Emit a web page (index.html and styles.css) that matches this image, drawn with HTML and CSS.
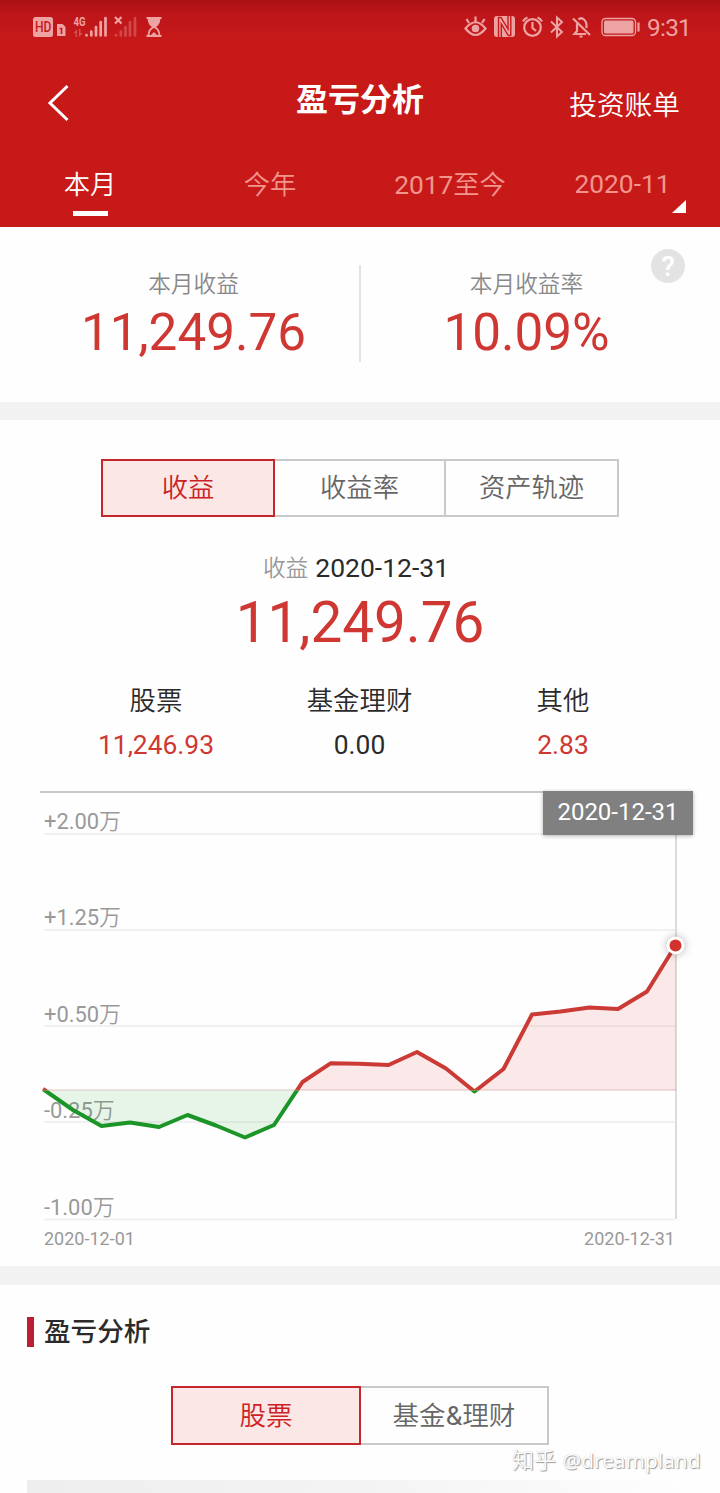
FILE: index.html
```html
<!DOCTYPE html>
<html lang="zh-CN">
<head>
<meta charset="utf-8">
<title>盈亏分析</title>
<link rel="stylesheet" href="styles.css">
</head>
<body>
<div class="screen">
  <header class="header">
    <div class="status">
      <svg class="status-left" width="136" height="26" viewBox="30 14 136 26" fill="#eea3a3">
        <rect x="33" y="17" width="20" height="20" rx="2.500"/>
        <text class="hd" x="35" y="32" textLength="16.500" lengthAdjust="spacingAndGlyphs">HD</text>
        <path d="M57 24h5.500l3 3v9H57z"/>
        <path d="M59.500 28.500h2V34" fill="none" stroke="#c81919" stroke-width="1.600"/>
        <text class="net" x="73.500" y="26" textLength="12" lengthAdjust="spacingAndGlyphs">4G</text>
        <path opacity=".4" d="M73.500 33l3.500-4v8h-1.500v-4zM79 29v8l4-4h-2.500v-4z"/>
        <g stroke="#eea3a3" stroke-width="2.700" stroke-linecap="round">
          <path d="M86.500 35v.5M91.300 31.500v4M96 27v8.500M100.700 22v13.500M105.500 18v17.500"/>
          <path opacity=".35" d="M116 35v.5M120.800 31.500v4M125.500 27v8.500M130 22v13.500M135 18v17.500"/>
          <path stroke-linecap="butt" d="M115 17l6.500 6.500m0-6.500l-6.500 6.500" stroke-width="2.200"/>
        </g>
        <path fill-rule="evenodd" d="M146.500 17h15v2h-1.200c0 4-2 6.500-4.300 8 2.300 1.500 4.300 4 4.300 8h1.200v2h-15v-2h1.200c0-4 2-6.500 4.300-8-2.300-1.500-4.300-4-4.300-8h-1.200zM149.500 35h1.500l3-3 3 3h1.500c0-3.500-2-6-4.500-7-2.500 1-4.500 3.500-4.500 7z"/>
      </svg>
      <svg class="status-right" width="178" height="26" viewBox="463 14 178 26" fill="none" stroke="#eea3a3" stroke-width="2.200">
        <path d="M465.500 28.500q10-12.500 20 0q-10 13-20 0zM475.500 21.500v-5M469 23l-2.500-4M482 23l2.500-4"/>
        <circle cx="475.500" cy="28.500" r="3.800" fill="#eea3a3" stroke="none"/>
        <rect x="494" y="16" width="21" height="21" rx="3" fill="#eea3a3" stroke="none"/>
        <path stroke="#c81919" stroke-width="1.400" d="M498.500 37V17.500h2.500l7 11.500V16M510.800 16v19.500h-2.500l-7-11.500v13"/>
        <circle cx="532.500" cy="27.500" r="8.300"/>
        <path d="M532.500 22v6l3.500 3M523 21.500q1.500-3 4.500-4M542 21.500q-1.500-3-4.500-4"/>
        <path stroke-width="2" d="M551 21.500l11 10.500-5 4.500V17.500l5 4.500-11 10.500"/>
        <path d="M573 18.500l17 16.500M577 23.500V31l-2.500 3H586M578.500 19.500q2.500-2.500 5.500 0q3 2.500 2.500 8.500M579.500 36.500h3"/>
        <rect x="602" y="18.500" width="33.500" height="17" rx="3.500" stroke-width="1.300"/>
        <rect x="604" y="20.500" width="29.500" height="13" rx="1.500" fill="#eea3a3" stroke="none"/>
        <path d="M638.500 22.500v9" stroke-width="2.200"/>
      </svg>
      <span class="clock">9:31</span>
    </div>
    <div class="navbar">
      <svg class="back" width="24" height="38" viewBox="0 0 24 38" fill="none" stroke="#fff" stroke-width="3"><path d="M20.500 2L3 19 20.500 36"/></svg>
      <h1 class="title">盈亏分析</h1>
      <span class="bill">投资账单</span>
    </div>
    <nav class="tabs">
      <span class="tab tab-on">本月</span>
      <span class="tab">今年</span>
      <span class="tab">2017至今</span>
      <span class="tab tab-pick">2020-11</span>
    </nav>
  </header>

  <section class="summary">
    <div class="stat">
      <span class="stat-label">本月收益</span>
      <span class="stat-value">11,249.76</span>
    </div>
    <div class="divider"></div>
    <div class="stat stat-rate">
      <span class="stat-label">本月收益率</span>
      <span class="stat-value">10.09%</span>
    </div>
    <span class="help">?</span>
  </section>

  <section class="trend">
    <div class="segments">
      <span class="seg seg-on">收益</span>
      <span class="seg">收益率</span>
      <span class="seg">资产轨迹</span>
    </div>
    <div class="day"><span class="day-label">收益</span>2020-12-31</div>
    <div class="total">11,249.76</div>
    <div class="parts">
      <div class="part"><span>股票</span><span class="red">11,246.93</span></div>
      <div class="part"><span>基金理财</span><span>0.00</span></div>
      <div class="part"><span>其他</span><span class="red">2.83</span></div>
    </div>
    <div class="chart">
      <svg class="plot" width="720" height="442" viewBox="0 784 720 442">
        <defs>
          <clipPath id="gain"><rect x="0" y="784" width="720" height="306.500"/></clipPath>
          <clipPath id="loss"><rect x="0" y="1090.500" width="720" height="140"/></clipPath>
        </defs>
        <path d="M40 792h640" stroke="#c9c9c9" stroke-width="2"/>
        <path d="M44 834h631M44 930h631M44 1026h631M44 1122h631M44 1219.500h631" stroke="#f1f1f1" stroke-width="2"/>
        <path d="M676 834v385" stroke="#dcdcdc" stroke-width="2"/>
        <g class="axis">
          <text x="44" y="828.500">+2.00万</text>
          <text x="44" y="925">+1.25万</text>
          <text x="44" y="1021.500">+0.50万</text>
          <text x="44" y="1118">-0.25万</text>
          <text x="44" y="1214.500">-1.00万</text>
        </g>
        <path clip-path="url(#gain)" fill="#e03030" fill-opacity=".1" d="M44 1090L73 1110 101.500 1126 130 1122.500 159 1127 187.500 1115 216 1125.500 245 1137.500 274 1125 302.500 1082 330.500 1063.300 359 1063.700 388.500 1065 417 1052 446 1068.500 474.500 1091.500 503.500 1069 532 1014.500 560.500 1011.500 589.500 1007.500 618 1009 647 991.500 676 945.500V1090.500H44z"/>
        <path clip-path="url(#loss)" fill="#1a9928" fill-opacity=".1" d="M44 1090L73 1110 101.500 1126 130 1122.500 159 1127 187.500 1115 216 1125.500 245 1137.500 274 1125 302.500 1082V1090H44z"/>
        <path d="M44 1090h632" stroke="#a03030" stroke-opacity=".13" stroke-width="2"/>
        <polyline class="line line-gain" clip-path="url(#gain)" points="43,1089 73,1110 101.500,1126 130,1122.500 159,1127 187.500,1115 216,1125.500 245,1137.500 274,1125 302.500,1082 330.500,1063.300 359,1063.700 388.500,1065 417,1052 446,1068.500 474.500,1091.500 503.500,1069 532,1014.500 560.500,1011.500 589.500,1007.500 618,1009 647,991.500 675.500,945.500"/>
        <polyline class="line line-loss" clip-path="url(#loss)" points="43,1089 73,1110 101.500,1126 130,1122.500 159,1127 187.500,1115 216,1125.500 245,1137.500 274,1125 302.500,1082 330.500,1063.300 446,1068.500 474.500,1091.500 503.500,1069"/>
        <circle class="halo" cx="675.500" cy="945.500" r="9" fill="#fff"/>
        <circle cx="675.500" cy="945.500" r="6" fill="#d2322d"/>
      </svg>
      <span class="tip">2020-12-31</span>
      <div class="range"><span>2020-12-01</span><span>2020-12-31</span></div>
    </div>
  </section>

  <section class="analysis">
    <h2 class="heading">盈亏分析</h2>
    <div class="segments segments-two">
      <span class="seg seg-on">股票</span>
      <span class="seg">基金&amp;理财</span>
    </div>
    <div class="strip"></div>
  </section>
  <span class="watermark">知乎 <span class="handle">@dreampland</span></span>
</div>
</body>
</html>
```
FILE: styles.css
```css
* { box-sizing: border-box; }
body { margin: 0; background: #fff; }
.screen {
  position: relative;
  width: 720px;
  height: 1493px;
  overflow: hidden;
  background: #fefefe;
  color: #2a2a2a;
  font-family: Roboto, "Noto Sans CJK SC DemiLight", "Noto Sans CJK SC", sans-serif;
}
.header {
  height: 227px;
  background: linear-gradient(#aa1014, #be161a 16px, #c81919 42px);
  color: #fff;
}
.status { display: flex; align-items: center; height: 54px; padding-left: 30px; color: #eea3a3; }
.status-right { margin-left: 297px; }
.hd { font: 500 14.500px Roboto, sans-serif; fill: #c81919; }
.net { font: 700 12.500px Roboto, sans-serif; }
.clock { margin: 1px 0 0 6px; font-size: 24.300px; line-height: 26px; letter-spacing: -.7px; }

.navbar { display: grid; grid-template-columns: 220px 280px 1fr; height: 96px; padding-right: 40px; }
.back { margin: 30px 0 0 47px; }
.title { margin: 26px 0 0; font-family: Roboto, "Noto Sans CJK SC", sans-serif; font-size: 32px; line-height: 40px; font-weight: 700; text-align: center; }
.bill { margin-top: 32px; font-size: 27.700px; line-height: 40px; text-align: right; white-space: nowrap; }

.tabs { display: grid; grid-template-columns: 180px 180px 180px 180px; height: 77px; font-size: 26.300px; line-height: 70px; text-align: center; color: #f2958c; }
.tab { position: relative; }
.tab-on { color: #fff; }
.tab-on::after { content: ""; position: absolute; left: 73px; top: 61px; width: 35px; height: 5px; background: #fff; }
.tab-pick { padding-right: 15px; line-height: 69px; }
.tab-pick::after { content: ""; position: absolute; left: 132px; top: 50px; border-left: 14px solid transparent; border-bottom: 13px solid #fff; }

.summary { position: relative; display: flex; height: 193px; padding-top: 38px; border-bottom: 18px solid #f2f2f2; }
.stat { display: flex; flex-direction: column; width: 360px; padding-left: 27px; text-align: center; }
.stat-rate { padding: 0 27px 0 0; }
.stat-label { margin-top: 3px; font-size: 22.700px; line-height: 33px; color: #888; }
.stat-value { font-size: 51.200px; line-height: 62px; margin-top: 1px; color: #cf3732; }
.divider { flex: none; width: 2px; height: 97px; margin: 0 -1px; background: #e3e3e3; }
.help { position: absolute; left: 651px; top: 22px; width: 34px; height: 34px; border-radius: 50%; background: #e3e3e3; color: #fff; font-size: 28px; font-weight: 500; line-height: 35px; text-align: center; }

.trend { height: 865px; padding-top: 39px; border-bottom: 19px solid #f2f2f2; }
.segments { display: grid; grid-template-columns: 174px 171px 173px; width: 518px; height: 58px; margin-left: 101px; font-size: 26.300px; line-height: 54px; text-align: center; color: #666; }
.seg { border: 2px solid #c9c9c9; border-left-width: 0; }
.seg-on { border: 2px solid #c4282d; background: #fbe7e6; color: #cc1f26; }
.day { display: flex; justify-content: center; margin-top: 32px; padding-right: 8px; font-size: 26.500px; line-height: 38px; }
.day-label { margin: 1px 7px -1px 0; font-size: 22.700px; color: #999; }
.total { margin-top: 4px; font-size: 56.600px; line-height: 64px; text-align: center; color: #cf3732; }
.parts { display: grid; grid-template-columns: 204px 203px 204px; margin: 24px 0 0 54px; text-align: center; font-size: 26.400px; }
.part { display: flex; flex-direction: column; line-height: 45px; }
.part span + span { margin-top: -1px; }
.red { color: #cf3732; }
.chart { position: relative; margin-top: 16px; }
.plot { display: block; }
.axis { font-size: 21.900px; fill: #999; }
.line { fill: none; stroke-width: 4; stroke-linejoin: round; }
.line-gain { stroke: #cb3a35; }
.line-loss { stroke: #1b9527; }
.halo { filter: drop-shadow(0 0 4px rgba(0, 0, 0, .3)); }
.tip { position: absolute; left: 543px; top: 7px; width: 150px; height: 44px; background: #808080; color: #fff; font-size: 24px; line-height: 43px; text-align: center; box-shadow: 0 1px 4px rgba(0, 0, 0, .3); }
.range { display: flex; justify-content: space-between; padding: 0 45px 0 44px; font-size: 18px; line-height: 26px; color: #999; }

.analysis { padding-top: 32px; }
.heading { margin: 0 0 0 27px; height: 30px; border-left: 7px solid #bb1f35; padding-left: 10px; font-family: Roboto, "Noto Sans CJK SC", sans-serif; font-size: 26.600px; font-weight: 500; line-height: 30px; }
.segments-two { grid-template-columns: 190px 188px; width: 378px; height: 59px; margin: 39px 0 0 171px; font-size: 26.600px; line-height: 55px; }
.strip { height: 13px; margin: 35px 30px 0 27px; background: linear-gradient(90deg, #eee, #f3f3f3 50%, #fefefe); }
.watermark { position: absolute; left: 512px; top: 1446px; font-size: 22px; line-height: 28px; color: #fff; white-space: nowrap; text-shadow: 1px 1px 1px #999, 0 0 1px #bbb; }
.handle { margin-left: 1px; font-family: "Noto Sans", sans-serif; font-size: 20.800px; }
```
